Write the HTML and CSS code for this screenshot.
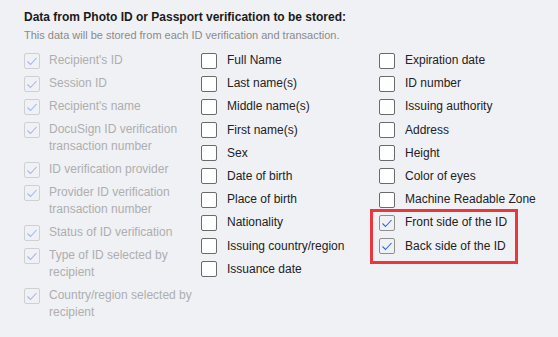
FILE: index.html
```html
<!DOCTYPE html>
<html lang="en">
<head>
    <meta charset="UTF-8">
    <meta name="viewport" content="width=device-width, initial-scale=1.0">
    <title>ID verification data</title>
    <link rel="stylesheet" href="styles.css">
</head>
<body>
    <div class="panel">
        <h2 class="title">Data from Photo ID or Passport verification to be stored:</h2>
        <p class="subtitle">This data will be stored from each ID verification and transaction.</p>

        <div class="columns">
            <div class="col col-fixed">
                <label class="item disabled"><span class="box checked"></span><span>Recipient's ID</span></label>
                <label class="item disabled"><span class="box checked"></span><span>Session ID</span></label>
                <label class="item disabled"><span class="box checked"></span><span>Recipient's name</span></label>
                <label class="item disabled"><span class="box checked"></span><span>DocuSign ID verification transaction number</span></label>
                <label class="item disabled"><span class="box checked"></span><span>ID verification provider</span></label>
                <label class="item disabled"><span class="box checked"></span><span>Provider ID verification transaction number</span></label>
                <label class="item disabled"><span class="box checked"></span><span>Status of ID verification</span></label>
                <label class="item disabled"><span class="box checked"></span><span>Type of ID selected by recipient</span></label>
                <label class="item disabled"><span class="box checked"></span><span>Country/region selected by recipient</span></label>
            </div>

            <div class="col">
                <label class="item"><span class="box"></span><span>Full Name</span></label>
                <label class="item"><span class="box"></span><span>Last name(s)</span></label>
                <label class="item"><span class="box"></span><span>Middle name(s)</span></label>
                <label class="item"><span class="box"></span><span>First name(s)</span></label>
                <label class="item"><span class="box"></span><span>Sex</span></label>
                <label class="item"><span class="box"></span><span>Date of birth</span></label>
                <label class="item"><span class="box"></span><span>Place of birth</span></label>
                <label class="item"><span class="box"></span><span>Nationality</span></label>
                <label class="item"><span class="box"></span><span>Issuing country/region</span></label>
                <label class="item"><span class="box"></span><span>Issuance date</span></label>
            </div>

            <div class="col">
                <label class="item"><span class="box"></span><span>Expiration date</span></label>
                <label class="item"><span class="box"></span><span>ID number</span></label>
                <label class="item"><span class="box"></span><span>Issuing authority</span></label>
                <label class="item"><span class="box"></span><span>Address</span></label>
                <label class="item"><span class="box"></span><span>Height</span></label>
                <label class="item"><span class="box"></span><span>Color of eyes</span></label>
                <label class="item"><span class="box"></span><span>Machine Readable Zone</span></label>
                <div class="highlight">
                    <label class="item"><span class="box checked"></span><span>Front side of the ID</span></label>
                    <label class="item"><span class="box checked"></span><span>Back side of the ID</span></label>
                </div>
            </div>
        </div>
    </div>

    <script>
        // draw the tick inside every checked box
        var tick = '<svg viewBox="0 0 16 16" width="16" height="16"><polyline points="3.5,8.5 6.5,11.5 12.5,5" fill="none" stroke="currentColor" stroke-width="1.1"/></svg>';
        document.querySelectorAll(".box.checked").forEach(function (box) {
            box.innerHTML = tick;
        });
    </script>
</body>
</html>
```

FILE: styles.css
```css
* {
    margin: 0;
    padding: 0;
    box-sizing: border-box;
    font-family: "Liberation Sans", Arial, sans-serif;
}

body {
    background: #f0f1f5;
    color: #1e1e1e;
}

.panel {
    padding: 9px 0 0 24px;
}

.title {
    font-size: 12px;
    font-weight: bold;
    line-height: 16px;
    color: #1a1a1a;
}

.subtitle {
    font-size: 11px;
    line-height: 14px;
    color: #8a8a8a;
    margin-top: 3px;
}

.columns {
    display: grid;
    grid-template-columns: 177px 178px 1fr;
    margin-top: 10px;
}

.col {
    display: flex;
    flex-direction: column;
    gap: 6.2px;
}

.col-fixed {
    gap: 6px;
}

.col-fixed .item span:last-child {
    max-width: 146px;
}

.item {
    display: flex;
    align-items: flex-start;
    gap: 10px;
    font-size: 12px;
    line-height: 17px;
    color: #222;
}

.item.disabled {
    gap: 9px;
    color: #aeaeae;
}

.box {
    flex: none;
    width: 16px;
    height: 16px;
    margin-top: 0.5px;
    background: #fff;
    border: 1px solid #6b6b6b;
    border-radius: 2px;
    color: #2f6ad6;
}

.box svg {
    display: block;
    margin: -1px;
}

.box.checked {
    background: transparent;
    border-color: #8f8f8f;
}

.disabled .box {
    border-color: #cfd0d4;
    color: #9fb7ea;
}

.highlight {
    display: flex;
    flex-direction: column;
    gap: 6.2px;
    width: 148px;
    margin: -5px 0 0 -9px;
    padding: 2px 0 6px 6px;
    border: 3px solid #e8383d;
}
```
